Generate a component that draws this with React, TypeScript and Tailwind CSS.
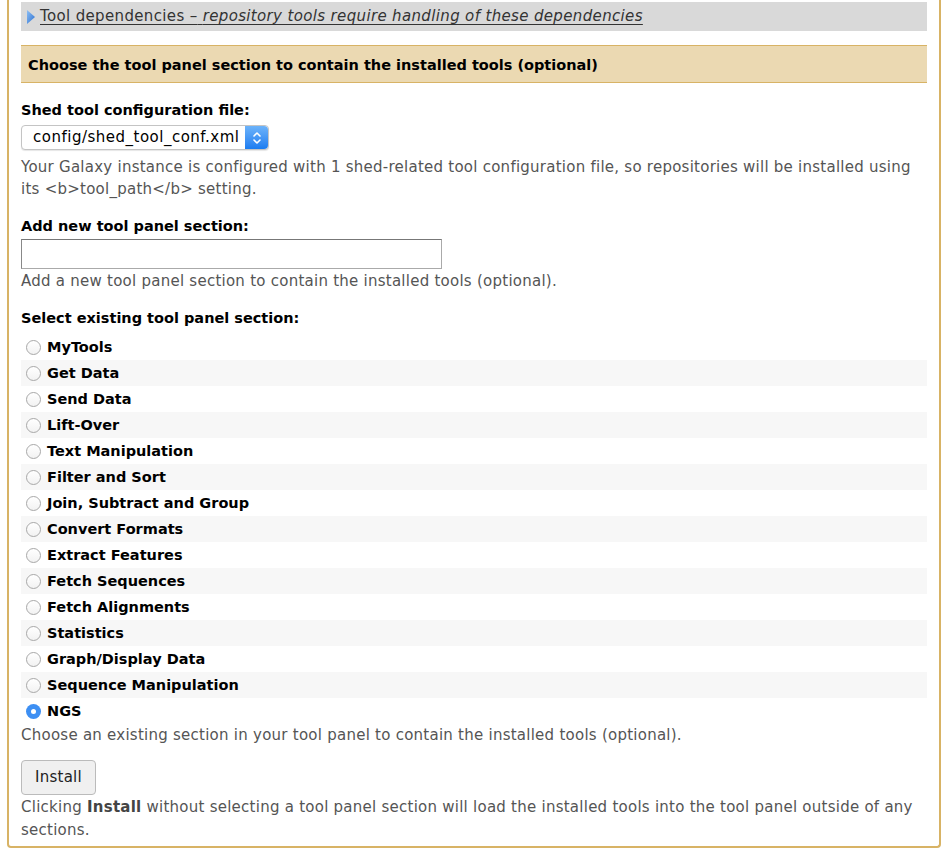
import React from "react";

const sections = [
  "MyTools",
  "Get Data",
  "Send Data",
  "Lift-Over",
  "Text Manipulation",
  "Filter and Sort",
  "Join, Subtract and Group",
  "Convert Formats",
  "Extract Features",
  "Fetch Sequences",
  "Fetch Alignments",
  "Statistics",
  "Graph/Display Data",
  "Sequence Manipulation",
  "NGS",
];

function Radio({ checked }: { checked: boolean }) {
  if (checked) {
    return (
      <span className="flex h-[15px] w-[15px] shrink-0 items-center justify-center rounded-full bg-[#3d8ff3]">
        <span className="h-[5px] w-[5px] rounded-full bg-white" />
      </span>
    );
  }
  return (
    <span className="h-[15px] w-[15px] shrink-0 rounded-full border border-[#a8a8a8] bg-gradient-to-b from-white to-[#f2f2f2]" />
  );
}

export default function App() {
  return (
    <div
      className="min-h-[856px] bg-white text-[15px] tracking-[0.25px] text-[#000]"
      style={{ fontFamily: '"DejaVu Sans", sans-serif' }}
    >
      <div className="mx-[7px] w-[934px] rounded-b-[4px] border-x-2 border-b-2 border-[#d8b365] px-[12px] pb-[4px] pt-[2px]">
        <div className="flex h-[29px] items-center bg-[#d9d9d9] pl-[5px]">
          <svg width="10" height="16" viewBox="0 0 10 16" className="mr-[4px]">
            <defs>
              <linearGradient id="tri" x1="0" y1="0" x2="1" y2="1">
                <stop offset="0" stopColor="#8fc0f5" />
                <stop offset="1" stopColor="#2a6fd0" />
              </linearGradient>
            </defs>
            <path d="M1 1 L9 8 L1 15 Z" fill="url(#tri)" />
          </svg>
          <span className="tracking-[0.35px] text-[#333] underline decoration-[#333] underline-offset-[3px]">
            Tool dependencies –{" "}
            <i>repository tools require handling of these dependencies</i>
          </span>
        </div>

        <div className="mt-[14px] flex h-[38px] items-center border-y border-[#d8b365] bg-[#ebd9b2] pl-[7px] pt-[3px] text-[14.5px] font-bold tracking-normal">
          Choose the tool panel section to contain the installed tools (optional)
        </div>

        <div className="mt-[16px] text-[14.5px] font-bold leading-[22px] tracking-normal">Shed tool configuration file:</div>
        <div className="mt-[4px] flex h-[25px] w-[248px] items-stretch rounded-[4px] border border-[#c4c4c4] bg-white shadow-[0_1px_1px_rgba(0,0,0,0.1)]">
          <span className="flex flex-1 items-center overflow-hidden whitespace-nowrap pl-[11px] leading-none tracking-[0.5px]">config/shed_tool_conf.xml</span>
          <span className="flex w-[23px] shrink-0 items-center justify-center rounded-r-[4px] bg-gradient-to-b from-[#6cb3fa] to-[#1a7cf0]">
            <svg width="10" height="14" viewBox="0 0 10 14" fill="none" stroke="white" strokeWidth="1.6" strokeLinecap="round" strokeLinejoin="round">
              <path d="M2 5 L5 2 L8 5" />
              <path d="M2 9 L5 12 L8 9" />
            </svg>
          </span>
        </div>
        <div className="mt-[6px] leading-[22px] text-[#555]">
          Your Galaxy instance is configured with 1 shed-related tool configuration file, so repositories will be installed using its &lt;b&gt;tool_path&lt;/b&gt; setting.
        </div>

        <div className="mt-[15px] text-[14.5px] font-bold leading-[22px] tracking-normal">Add new tool panel section:</div>
        <div className="mt-[2px] h-[30px] w-[421px] border border-[#aaa] border-t-[#777] border-l-[#888] bg-white" />
        <div className="mt-[1px] leading-[22px] text-[#555]">
          Add a new tool panel section to contain the installed tools (optional).
        </div>

        <div className="mt-[15px] text-[14.5px] font-bold leading-[22px] tracking-normal">Select existing tool panel section:</div>
        <div className="mt-[5px]">
          {sections.map((s, i) => (
            <div
              key={s}
              className={`flex h-[26px] items-center gap-[6px] pl-[5px] pt-[1px] text-[14.5px] font-bold tracking-normal ${i % 2 === 1 ? "bg-[#f7f7f7]" : ""}`}
            >
              <Radio checked={s === "NGS"} />
              <span>{s}</span>
            </div>
          ))}
        </div>
        <div className="mt-[0px] leading-[22px] text-[#555]">
          Choose an existing section in your tool panel to contain the installed tools (optional).
        </div>

        <button className="mt-[14px] flex h-[35px] items-center rounded-[4px] border border-[#bbb] bg-[#f0f0f0] px-[13px] text-[#222]">
          Install
        </button>
        <p className="mt-[1px] leading-[23px] text-[#555]">
          Clicking <b className="text-[#444]">Install</b> without selecting a tool panel section will load the installed tools into the tool panel outside of any sections.
        </p>
      </div>
    </div>
  );
}
